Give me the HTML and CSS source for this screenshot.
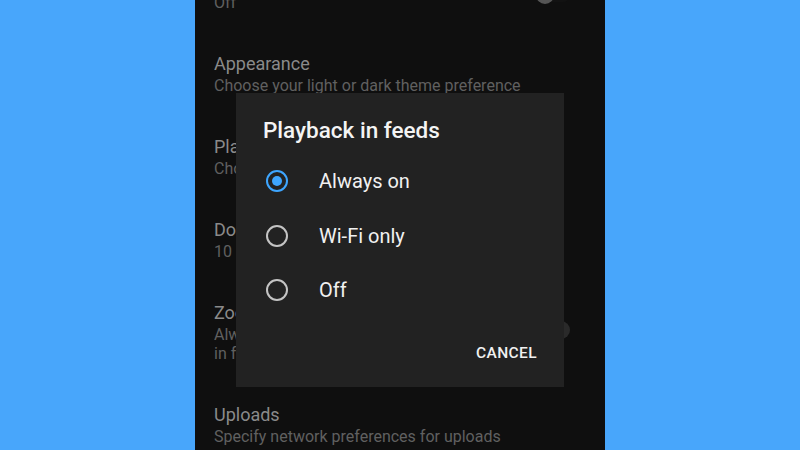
FILE: index.html
```html
<!DOCTYPE html>
<html lang="en">
<head>
    <meta charset="UTF-8">
    <meta name="viewport" content="width=device-width, initial-scale=1.0">
    <title>Settings - Playback in feeds</title>
    <link rel="stylesheet" href="styles.css">
</head>
<body>
    <div class="phone">
        <!-- settings list, scrolled a little -->
        <div class="settings">
            <div class="item">
                <div class="item-text">
                    <div class="item-title">Restricted Mode</div>
                    <div class="item-sub">Off</div>
                </div>
                <div class="toggle"><span class="knob"></span></div>
            </div>
            <div class="item">
                <div class="item-text">
                    <div class="item-title">Appearance</div>
                    <div class="item-sub">Choose your light or dark theme preference</div>
                </div>
            </div>
            <div class="item">
                <div class="item-text">
                    <div class="item-title">Playback in feeds</div>
                    <div class="item-sub">Choose whether videos play as you browse</div>
                </div>
            </div>
            <div class="item">
                <div class="item-text">
                    <div class="item-title">Double-tap to seek</div>
                    <div class="item-sub">10 seconds</div>
                </div>
            </div>
            <div class="item">
                <div class="item-text">
                    <div class="item-title">Zoom to fill screen</div>
                    <div class="item-sub">Always zoom so that videos fill the screen<br>in full screen</div>
                </div>
                <div class="toggle on"><span class="knob"></span></div>
            </div>
            <div class="item">
                <div class="item-text">
                    <div class="item-title">Uploads</div>
                    <div class="item-sub">Specify network preferences for uploads</div>
                </div>
            </div>
        </div>

        <!-- dialog -->
        <div class="dialog">
            <div class="dialog-title">Playback in feeds</div>
            <div class="options">
                <div class="option">
                    <span class="radio checked"></span>
                    <span class="option-label">Always on</span>
                </div>
                <div class="option">
                    <span class="radio"></span>
                    <span class="option-label">Wi-Fi only</span>
                </div>
                <div class="option">
                    <span class="radio"></span>
                    <span class="option-label">Off</span>
                </div>
            </div>
            <div class="actions">
                <button class="btn-cancel">CANCEL</button>
            </div>
        </div>
    </div>
</body>
</html>
```

FILE: styles.css
```css
body {
    margin: 0;
    padding: 0;
    height: 100vh;
    background: #48a6fb;
    display: flex;
    justify-content: center;
    font-family: Roboto, "Liberation Sans", sans-serif;
    overflow: hidden;
}
.phone {
    position: relative;
    width: 410px;
    height: 450px;
    background: #0f0f0f;
    overflow: hidden;
}
.settings {
    margin-top: -51px;
}
.item {
    display: flex;
    align-items: flex-start;
    padding: 19px 19px 20px 19px;
}
.item-text {
    flex: 1;
    overflow: hidden;
}
.item-title {
    font-size: 18px;
    line-height: 25px;
    color: #8a8a8a;
    white-space: nowrap;
}
.item-sub {
    font-size: 16px;
    line-height: 19px;
    color: #606060;
    white-space: nowrap;
}
.toggle {
    position: relative;
    flex-shrink: 0;
    width: 34px;
    height: 14px;
    margin-top: 20px;
    margin-right: 16px;
    border-radius: 7px;
    background: #121212;
}
.toggle .knob {
    position: absolute;
    top: -2px;
    left: 0;
    width: 18px;
    height: 18px;
    border-radius: 50%;
    background: #555555;
}
.toggle.on {
    margin-top: 23px;
}
.toggle.on .knob {
    left: auto;
    right: 0;
    background: #2a2a2a;
}
.dialog {
    position: absolute;
    left: 41px;
    top: 93px;
    width: 328px;
    height: 294px;
    box-sizing: border-box;
    padding: 23px 27px 16px 27px;
    background: #222222;
    display: flex;
    flex-direction: column;
}
.dialog-title {
    font-size: 22.5px;
    font-weight: 500;
    line-height: 28px;
    color: #f4f4f4;
}
.options {
    margin-top: 10px;
}
.option {
    display: flex;
    align-items: center;
    height: 54.5px;
}
.radio {
    flex-shrink: 0;
    width: 18px;
    height: 18px;
    margin-left: 3px;
    border: 2px solid #c4c4c4;
    border-radius: 50%;
    display: flex;
    align-items: center;
    justify-content: center;
}
.radio.checked {
    border-color: #3ea6ff;
}
.radio.checked::after {
    content: "";
    width: 10px;
    height: 10px;
    border-radius: 50%;
    background: #3ea6ff;
}
.option-label {
    margin-left: 31px;
    font-size: 20px;
    color: #f1f1f1;
}
.actions {
    margin-top: auto;
    display: flex;
    justify-content: flex-end;
}
.btn-cancel {
    height: 36px;
    padding: 0;
    border: none;
    background: none;
    color: #f1f1f1;
    font-family: Roboto, "Liberation Sans", sans-serif;
    font-size: 15.5px;
    font-weight: 500;
    letter-spacing: 0.4px;
}
```
